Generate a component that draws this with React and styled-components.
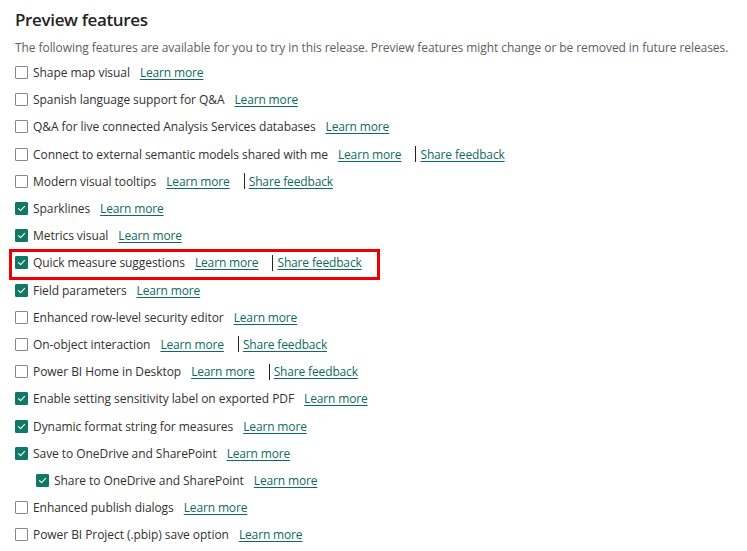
import React from "react";
import styled, { createGlobalStyle } from "styled-components";

const GlobalStyle = createGlobalStyle`
	html, body {
		margin: 0;
		padding: 0;
		background: #ffffff;
	}
	body {
		font-family: "Open Sans", "Noto Sans", sans-serif;
		color: #252423;
	}
`;

const Page = styled.div`
	padding: 8px 15px 0;
	height: 551px;
	overflow: hidden;
	box-sizing: border-box;
`;

const Title = styled.h1`
	margin: 0;
	font-size: 17px;
	line-height: 24px;
	font-weight: 600;
	letter-spacing: -0.35px;
	color: #252423;
`;

const Description = styled.p`
	margin: 4px 0 0;
	font-size: 12px;
	line-height: 24px;
	letter-spacing: -0.07px;
	color: #605e5c;
	white-space: nowrap;
`;

const List = styled.div`
	display: flex;
	flex-direction: column;
	margin-top: -1px;
`;

const Row = styled.div`
	position: relative;
	display: flex;
	align-items: center;
	height: 27.2px;
	width: fit-content;
	padding-left: ${props => (props.indent ? "21px" : "0")};
	font-size: 12px;
	letter-spacing: -0.06px;

	${props =>
		props.highlight &&
		`
		&::after {
			content: "";
			position: absolute;
			left: -6px;
			right: -18px;
			top: 0;
			bottom: -3px;
			border: 3px solid #ee0000;
			pointer-events: none;
		}
	`}
`;

const Box = styled.span`
	display: inline-flex;
	align-items: center;
	justify-content: center;
	width: 13px;
	height: 13px;
	box-sizing: border-box;
	border: 1px solid ${props => (props.checked ? "#117865" : "#8a8886")};
	background: ${props => (props.checked ? "#117865" : "#ffffff")};
	border-radius: 1px;
	margin-right: 5px;
	flex-shrink: 0;
`;

const Label = styled.span`
	color: #323130;
	white-space: nowrap;
`;

const Link = styled.a`
	color: #0e6b5c;
	text-decoration: underline;
	text-underline-offset: 2px;
	white-space: nowrap;
	cursor: pointer;
	margin-left: ${props => props.gap || "10px"};
	letter-spacing: -0.15px;
`;

const Separator = styled.span`
	display: inline-block;
	width: 1px;
	height: 16px;
	background: #252423;
	margin-left: 14px;
	margin-right: 4px;
`;

const Check = () => (
	<svg width="9" height="9" viewBox="0 0 9 9" fill="none">
		<path d="M1.5 4.6 L3.6 6.6 L7.6 2.4" stroke="#ffffff" strokeWidth="1.1" strokeLinecap="round" strokeLinejoin="round" />
	</svg>
);

const features = [
	{ label: "Shape map visual" },
	{ label: "Spanish language support for Q&A" },
	{ label: "Q&A for live connected Analysis Services databases" },
	{ label: "Connect to external semantic models shared with me", feedback: true },
	{ label: "Modern visual tooltips", feedback: true },
	{ label: "Sparklines", checked: true },
	{ label: "Metrics visual", checked: true },
	{ label: "Quick measure suggestions", checked: true, feedback: true, highlight: true },
	{ label: "Field parameters", checked: true },
	{ label: "Enhanced row-level security editor" },
	{ label: "On-object interaction", feedback: true },
	{ label: "Power BI Home in Desktop", feedback: true },
	{ label: "Enable setting sensitivity label on exported PDF", checked: true },
	{ label: "Dynamic format string for measures", checked: true },
	{ label: "Save to OneDrive and SharePoint", checked: true },
	{ label: "Share to OneDrive and SharePoint", checked: true, indent: true },
	{ label: "Enhanced publish dialogs" },
	{ label: "Power BI Project (.pbip) save option" }
];

export default function App() {
	return (
		<>
			<GlobalStyle />
			<Page>
				<Title>Preview features</Title>
				<Description>
					The following features are available for you to try in this release. Preview features might change or be
					removed in future releases.
				</Description>
				<List>
					{features.map(f => (
						<Row key={f.label} indent={f.indent} highlight={f.highlight}>
							<Box checked={f.checked}>{f.checked && <Check />}</Box>
							<Label>{f.label}</Label>
							<Link>Learn more</Link>
							{f.feedback && (
								<>
									<Separator />
									<Link gap="0">Share feedback</Link>
								</>
							)}
						</Row>
					))}
				</List>
			</Page>
		</>
	);
}
